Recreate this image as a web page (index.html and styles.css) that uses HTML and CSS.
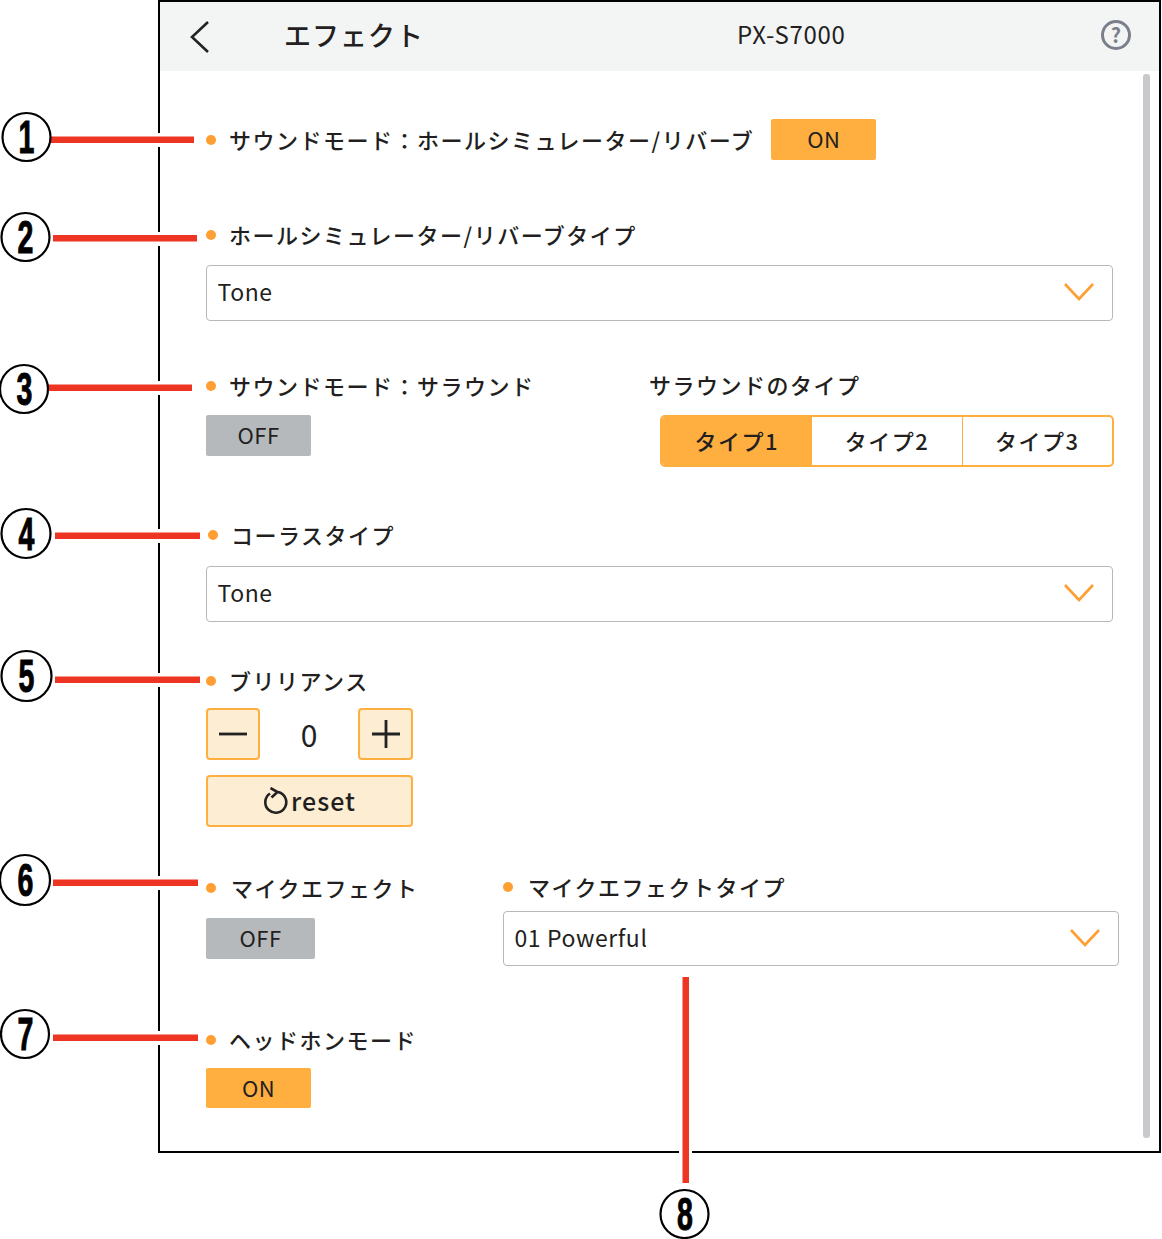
FILE: index.html
```html
<!DOCTYPE html>
<html lang="ja">
<head>
  <meta charset="UTF-8">
  <title>エフェクト</title>
  <link rel="stylesheet" href="styles.css">
</head>
<body>
  <div class="figure">
    <div class="frame">
      <div class="topbar">
        <svg class="back" width="24" height="34" viewBox="0 0 24 34"><path d="M20 2 L4 17 L20 32" fill="none" stroke="#222" stroke-width="2.6"/></svg>
        <span class="title">エフェクト</span>
        <span class="model">PX-S7000</span>
        <span class="help">?</span>
      </div>
      <div class="content">
        <div class="section first row-inline">
          <div class="label">サウンドモード：ホールシミュレーター/リバーブ</div>
          <div class="toggle on wide-gap">ON</div>
        </div>

        <div class="section s2">
          <div class="label">ホールシミュレーター/リバーブタイプ</div>
          <div class="select">Tone
            <svg class="chev" width="30" height="18" viewBox="0 0 30 18"><path d="M1 1 L15 16 L29 1" fill="none" stroke="#ff9f33" stroke-width="2.6"/></svg>
          </div>
        </div>

        <div class="section s3 cols">
          <div class="col-surround">
            <div class="label">サウンドモード：サラウンド</div>
            <div class="toggle off">OFF</div>
          </div>
          <div>
            <div class="label plain">サラウンドのタイプ</div>
            <div class="segments">
              <div class="seg active">タイプ1</div>
              <div class="seg">タイプ2</div>
              <div class="seg">タイプ3</div>
            </div>
          </div>
        </div>

        <div class="section s4">
          <div class="label shifted">コーラスタイプ</div>
          <div class="select">Tone
            <svg class="chev" width="30" height="18" viewBox="0 0 30 18"><path d="M1 1 L15 16 L29 1" fill="none" stroke="#ff9f33" stroke-width="2.6"/></svg>
          </div>
        </div>

        <div class="section s5">
          <div class="label">ブリリアンス</div>
          <div class="stepper">
            <div class="step">
              <svg width="28" height="28" viewBox="0 0 28 28"><path d="M0 14 H28" stroke="#222" stroke-width="2.8"/></svg>
            </div>
            <div class="value">0</div>
            <div class="step">
              <svg width="30" height="30" viewBox="0 0 30 30"><path d="M1 15 H29 M15 1 V29" stroke="#222" stroke-width="2.8"/></svg>
            </div>
          </div>
          <div class="reset">
            <svg width="26" height="28" viewBox="0 0 26 28"><path d="M7 6.500 A10.500 10.500 0 1 0 15 5" fill="none" stroke="#222" stroke-width="2.6"/><path d="M7.500 1 L14.500 5 L8.500 10.500" fill="none" stroke="#222" stroke-width="2.6"/></svg>
            <span>reset</span>
          </div>
        </div>

        <div class="section s6 cols">
          <div class="col-mic">
            <div class="label shifted-text">マイクエフェクト</div>
            <div class="toggle off mic">OFF</div>
          </div>
          <div>
            <div class="label low">マイクエフェクトタイプ</div>
            <div class="select mic-select">01 Powerful
              <svg class="chev" width="30" height="18" viewBox="0 0 30 18"><path d="M1 1 L15 16 L29 1" fill="none" stroke="#ff9f33" stroke-width="2.6"/></svg>
            </div>
          </div>
        </div>

        <div class="section s7">
          <div class="label">ヘッドホンモード</div>
          <div class="toggle on short">ON</div>
        </div>
      </div>
      <div class="scrollbar"></div>
    </div>

    <svg class="callouts" width="1162" height="1239" viewBox="0 0 1162 1239">
      <g fill="#fff">
        <rect x="154" y="133" width="12" height="14"/>
        <rect x="154" y="232" width="12" height="14"/>
        <rect x="154" y="381" width="12" height="14"/>
        <rect x="154" y="529" width="12" height="14"/>
        <rect x="154" y="673" width="12" height="14"/>
        <rect x="154" y="876" width="12" height="14"/>
        <rect x="154" y="1031" width="12" height="14"/>
        <rect x="679" y="1148" width="13" height="10"/>
      </g>
      <g fill="#ee3524">
        <rect x="48" y="136.500" width="146" height="6.500"/>
        <rect x="53" y="235" width="144" height="6.500"/>
        <rect x="47" y="384.500" width="145" height="6.500"/>
        <rect x="55" y="532.500" width="145" height="6.500"/>
        <rect x="55" y="676.500" width="145" height="6.500"/>
        <rect x="53" y="879.500" width="145" height="6.500"/>
        <rect x="53" y="1034.500" width="145" height="6.500"/>
        <rect x="682.500" y="977" width="6.500" height="206"/>
      </g>
      <g fill="#fff" stroke="#000" stroke-width="2.2">
        <circle cx="26.500" cy="137" r="24"/>
        <circle cx="25.500" cy="237" r="24"/>
        <circle cx="24" cy="389" r="24"/>
        <circle cx="26" cy="533.500" r="24.500"/>
        <circle cx="26.500" cy="676" r="25"/>
        <circle cx="25" cy="880" r="25"/>
        <circle cx="25" cy="1034" r="24"/>
        <circle cx="684.500" cy="1214" r="24"/>
      </g>
      <g class="num">
        <text transform="translate(26.500 153) scale(.62 1)">1</text>
        <text transform="translate(25.500 253) scale(.62 1)">2</text>
        <text transform="translate(24.500 405) scale(.62 1)">3</text>
        <text transform="translate(26.500 550) scale(.62 1)">4</text>
        <text transform="translate(26.500 692) scale(.62 1)">5</text>
        <text transform="translate(25.500 896) scale(.62 1)">6</text>
        <text transform="translate(25.500 1050) scale(.62 1)">7</text>
        <text transform="translate(685 1230) scale(.62 1)">8</text>
      </g>
    </svg>
  </div>
</body>
</html>
```

FILE: styles.css
```css
* {
  box-sizing: border-box;
}
body {
  margin: 0;
  background: #fff;
  color: #231f20;
  font-family: "Noto Sans CJK JP", "Noto Sans", sans-serif;
  font-weight: 500;
}
.figure {
  position: relative;
  width: 1162px;
  height: 1239px;
  overflow: hidden;
}
.frame {
  position: relative;
  width: 1003px;
  height: 1153px;
  margin-left: 158px;
  border: 2px solid #000;
}
.topbar {
  display: flex;
  align-items: center;
  height: 69px;
  background: #f3f5f4;
  position: relative;
}
.back {
  margin-left: 28px;
}
.title {
  margin-left: 72px;
  margin-bottom: 4px;
  font-size: 27px;
  letter-spacing: 1px;
  line-height: 1;
}
.model {
  margin-left: 313px;
  margin-bottom: 6px;
  font-size: 24px;
  font-weight: 400;
  letter-spacing: 0.7px;
  line-height: 32px;
}
.help {
  position: absolute;
  left: 941px;
  top: 18px;
  width: 30px;
  height: 30px;
  border: 3px solid #7b7f8b;
  border-radius: 50%;
  color: #7b7f8b;
  font-size: 20px;
  font-weight: 700;
  line-height: 23px;
  text-align: center;
}
.content {
  padding: 48px 40px 0 46px;
}
.section {
  margin-top: 50px;
}
.section.first {
  margin-top: 0;
}
.s2 {
  margin-top: 60px;
}
.s4 {
  margin-top: 53px;
}
.s5 {
  margin-top: 44px;
}
.s6 {
  margin-top: 46px;
}
.s7 {
  margin-top: 59px;
}
.row-inline {
  display: flex;
  align-items: center;
  height: 41px;
}
.cols {
  display: flex;
}
.col-surround {
  width: 444px;
}
.col-mic {
  width: 297px;
}
.label {
  position: relative;
  height: 30px;
  padding-left: 23px;
  font-size: 22px;
  letter-spacing: 1.5px;
  line-height: 28px;
  white-space: nowrap;
}
.label::before {
  content: "";
  position: absolute;
  left: 0;
  top: 10px;
  width: 10px;
  height: 10px;
  border-radius: 50%;
  background: #ff9f33;
}
.label.plain {
  padding-left: 0;
  margin-top: -1px;
  margin-left: -1px;
}
.label.plain::before {
  display: none;
}
.label.shifted {
  left: 2px;
}
.label.shifted-text {
  padding-left: 25px;
}
.label.low {
  padding-left: 25px;
  margin-top: -1px;
}
.toggle {
  width: 105px;
  height: 41px;
  border-radius: 2px;
  font-size: 22px;
  font-weight: 400;
  letter-spacing: 0.5px;
  line-height: 39px;
  text-align: center;
}
.toggle.on {
  background: #ffae40;
}
.toggle.off {
  margin-top: 14px;
  background: #b5b9bc;
}
.toggle.wide-gap {
  margin-left: 17px;
}
.toggle.mic {
  width: 109px;
  margin-top: 15px;
}
.toggle.short {
  height: 40px;
  margin-top: 13px;
}
.select {
  position: relative;
  width: 907px;
  height: 56px;
  margin-top: 15px;
  padding-left: 10.5px;
  border: 1.5px solid #b5b9bc;
  border-radius: 4px;
  font-size: 23px;
  font-weight: 400;
  letter-spacing: 0.6px;
  line-height: 51px;
}
.s4 .select {
  margin-top: 16px;
}
.select.mic-select {
  width: 616px;
  height: 55px;
  margin-top: 9px;
}
.chev {
  position: absolute;
  right: 18px;
  top: 17px;
}
.segments {
  display: flex;
  width: 454px;
  height: 52px;
  margin-top: 15px;
  margin-left: 10px;
  border: 2px solid #ffae40;
  border-radius: 5px;
  overflow: hidden;
}
.seg {
  flex: 1;
  border-left: 1px solid #ffae40;
  font-size: 22px;
  letter-spacing: 1.5px;
  line-height: 46px;
  text-align: center;
}
.seg.active {
  background: #ffae40;
  border-left: 0;
}
.stepper {
  display: flex;
  align-items: center;
  width: 207px;
  height: 52px;
  margin-top: 12px;
}
.step {
  display: flex;
  align-items: center;
  justify-content: center;
  width: 54px;
  height: 52px;
  background: #fcedd3;
  border: 2px solid #ffae40;
  border-radius: 4px;
}
.step:last-child {
  width: 55px;
}
.value {
  flex: 1;
  font-size: 30px;
  font-weight: 400;
  text-align: center;
}
.reset {
  display: flex;
  align-items: center;
  justify-content: center;
  gap: 2px;
  width: 207px;
  height: 52px;
  margin-top: 15px;
  background: #fcedd3;
  border: 2px solid #ffae40;
  border-radius: 4px;
  font-size: 25px;
  letter-spacing: 1px;
  line-height: 30px;
}
.reset span {
  margin-bottom: 2px;
}
.scrollbar {
  position: absolute;
  left: 983px;
  top: 72px;
  width: 7px;
  height: 1064px;
  border-radius: 3px;
  background: #c8c9cb;
}
.callouts {
  position: absolute;
  left: 0;
  top: 0;
}
.num text {
  font-family: "Liberation Sans", sans-serif;
  font-size: 46px;
  font-weight: 700;
  text-anchor: middle;
  fill: #000;
  stroke: #000;
  stroke-width: 1;
}
```
